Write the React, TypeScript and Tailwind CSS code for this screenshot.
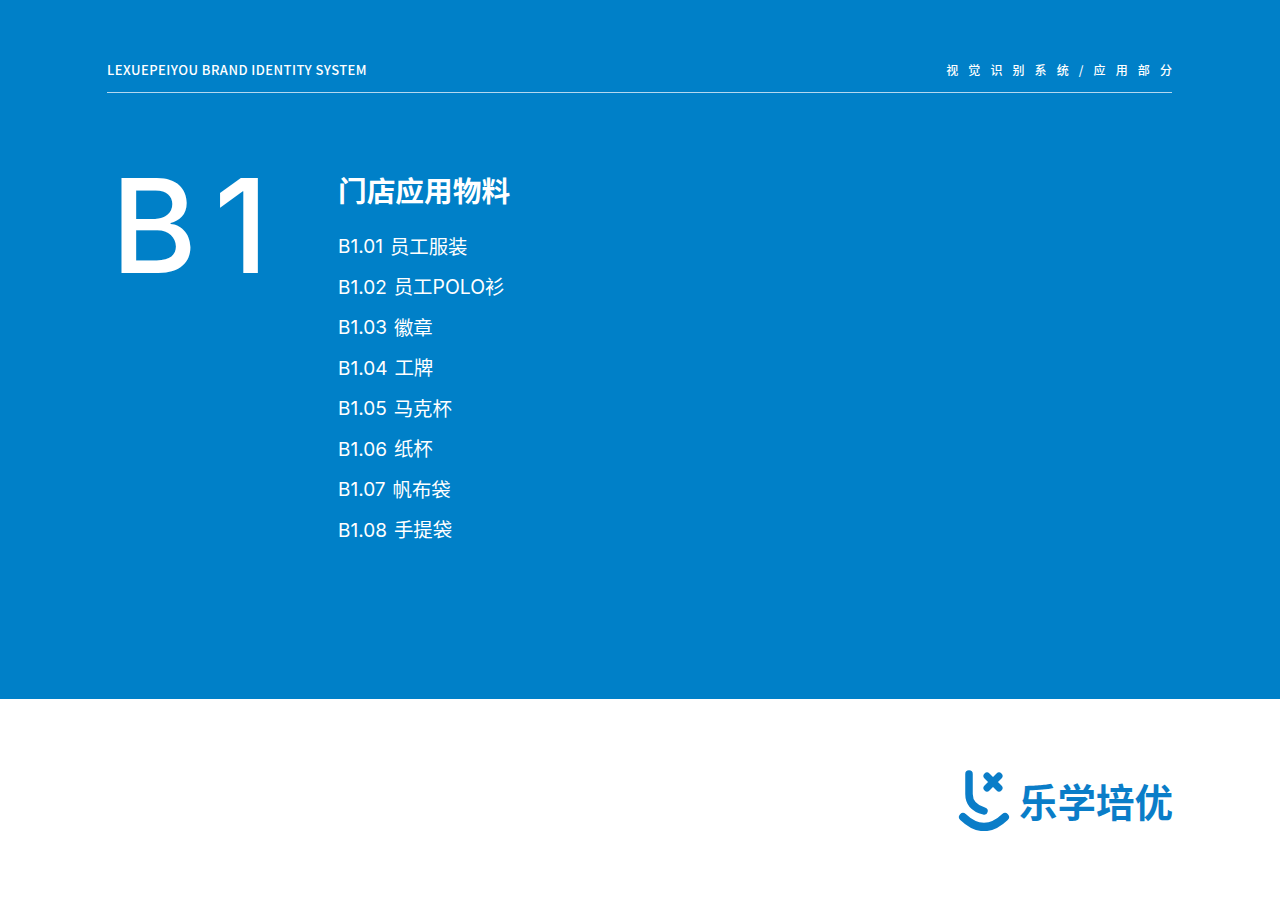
const items = [
  { code: "B1.01", name: "员工服装" },
  { code: "B1.02", name: "员工POLO衫" },
  { code: "B1.03", name: "徽章" },
  { code: "B1.04", name: "工牌" },
  { code: "B1.05", name: "马克杯" },
  { code: "B1.06", name: "纸杯" },
  { code: "B1.07", name: "帆布袋" },
  { code: "B1.08", name: "手提袋" },
];

function LogoMark() {
  return (
    <svg width="52" height="62" viewBox="0 0 52 62" fill="none" className="shrink-0">
      <path d="M11 5 V25 Q11 38 26 42" stroke="#0a7dc8" strokeWidth="7.5" strokeLinecap="round" />
      <path d="M5 48 Q26 68 47 48" stroke="#0a7dc8" strokeWidth="8" strokeLinecap="round" />
      <path d="M29 7 L41 19 M41 7 L29 19" stroke="#0a7dc8" strokeWidth="7" strokeLinecap="round" />
    </svg>
  );
}

export default function App() {
  return (
    <div className="min-h-[907px] bg-white font-['Inter','Noto_Sans_CJK_SC',sans-serif]">
      <div className="h-[699px] bg-[#0080c8] pl-[107px] pr-[108px] pt-[61px] text-white">
        <div className="flex h-[32px] items-start justify-between border-b border-[#b4d8f0]">
          <span className="font-['Noto_Sans_CJK_SC',sans-serif] text-[13px] leading-[17px] font-medium tracking-[0.45px]">
            LEXUEPEIYOU BRAND IDENTITY SYSTEM
          </span>
          <span className="font-['Noto_Sans_CJK_SC',sans-serif] text-[12px] leading-[17px] font-medium tracking-[10.1px] mr-[-10px]">
            视觉识别系统/应用部分
          </span>
        </div>

        <div className="flex pt-[58px]">
          <div className="w-[231px] pl-[4px] text-[131px] leading-[150px] font-medium tracking-[17px]">B1</div>
          <div className="pt-[19px]">
            <h1 className="font-['Noto_Sans_CJK_SC',sans-serif] text-[28.7px] leading-[40px] font-bold">门店应用物料</h1>
            <ul className="mt-[17px] flex flex-col text-[19px]">
              {items.map((item) => (
                <li key={item.code} className="flex h-[40.5px] items-center gap-[7px]">
                  <span>{item.code}</span>
                  <span className="text-[19.4px]">{item.name}</span>
                </li>
              ))}
            </ul>
          </div>
        </div>
      </div>

      <div className="flex justify-end pr-[107px] pt-[70px]">
        <div className="flex items-center gap-[9px]">
          <LogoMark />
          <span className="font-['Noto_Sans_CJK_SC',sans-serif] text-[38.5px] leading-[44px] font-bold text-[#0a7dc8]">乐学培优</span>
        </div>
      </div>
    </div>
  );
}
